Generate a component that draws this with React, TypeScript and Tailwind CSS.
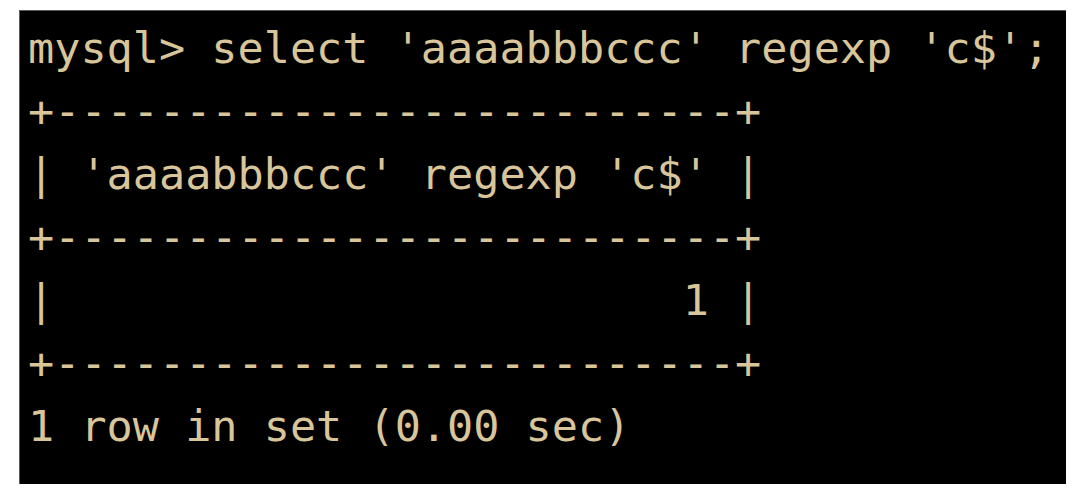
const border = '+' + '-'.repeat(26) + '+'

const lines = [
  "mysql> select 'aaaabbbccc' regexp 'c$';",
  border,
  "| 'aaaabbbccc' regexp 'c$' |",
  border,
  '|' + ' '.repeat(24) + '1 |',
  border,
  '1 row in set (0.00 sec)',
]

export default function App() {
  return (
    <div className="w-[1080px] h-[499px] bg-white pt-[10px] pl-[19px]">
      <div className="w-[1047px] h-[474px] bg-black border-t border-l border-[#5a5a5a] pt-[6px] pl-[8px]">
        <pre className="font-['DejaVu_Sans_Mono',monospace] text-[43.5px] leading-[63px] text-[#d9c59a] whitespace-pre">
          {lines.join('\n')}
        </pre>
      </div>
    </div>
  )
}
